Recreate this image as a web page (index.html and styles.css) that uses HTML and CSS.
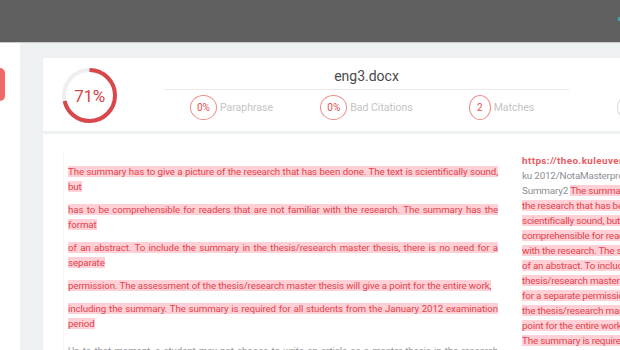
FILE: index.html
```html
<!DOCTYPE html>
<html lang="en">
<head>
<meta charset="UTF-8">
<meta name="viewport" content="width=device-width, initial-scale=1.0">
<title>eng3.docx - report</title>
<link rel="stylesheet" href="styles.css">
</head>
<body>
  <header class="topbar">
    <span class="topbar-dot"></span>
  </header>
  <div class="layout">
    <aside class="sidebar">
      <div class="sidebar-btn"></div>
    </aside>
    <main class="main">
      <section class="card summary-card">
        <div class="gauge">
          <svg width="55" height="55" viewBox="0 0 55 55">
            <circle cx="27.5" cy="27.5" r="25.5" fill="none" stroke="#efefef" stroke-width="4"/>
            <circle cx="27.5" cy="27.5" r="25.5" fill="none" stroke="#d9474a" stroke-width="4"
                    stroke-dasharray="113.8 160.2" transform="rotate(-90 27.5 27.5)"/>
          </svg>
          <span class="gauge-value">71%</span>
        </div>
        <div class="summary-info">
          <h1 class="doc-title">eng3.docx</h1>
          <div class="stats">
            <div class="stat"><span class="badge">0%</span><span class="stat-label">Paraphrase</span></div>
            <div class="stat"><span class="badge">0%</span><span class="stat-label">Bad Citations</span></div>
            <div class="stat"><span class="badge">2</span><span class="stat-label">Matches</span></div>
            <div class="stat stat-muted"><span class="badge">0</span><span class="stat-label">Sources</span></div>
          </div>
        </div>
      </section>
      <section class="card doc-card">
        <div class="doc-text">
          <p><span class="hl">The summary has to give a picture of the research that has been done. The text is scientifically sound, but</span></p>
          <p><span class="hl">has to be comprehensible for readers that are not familiar with the research. The summary has the format</span></p>
          <p><span class="hl">of an abstract. To include the summary in the thesis/research master thesis, there is no need for a separate</span></p>
          <p><span class="hl">permission. The assessment of the thesis/research master thesis will give a point for the entire work,</span></p>
          <p><span class="hl">including the summary. The summary is required for all students from the January 2012 examination period</span></p>
          <p class="plain">Up to that moment, a student may not choose to write an article as a master thesis in the research master.</p>
        </div>
        <div class="source">
          <a class="source-link">https://theo.kuleuven.be/</a>
          <span class="source-path">ku 2012/NotaMasterproef</span>
          <p class="source-text">Summary2 <span class="hl">The summary has to give a picture of the research that has been done. The text is scientifically sound, but has to be comprehensible for readers that are not familiar with the research. The summary has the format of an abstract. To include the summary in the thesis/research master thesis, there is no need for a separate permission. The assessment of the thesis/research master thesis will give a point for the entire work, including the summary. The summary is required for all students from the January 2012 examination period</span></p>
        </div>
      </section>
    </main>
  </div>
</body>
</html>
```

FILE: styles.css
```css
body { margin: 0; font-family: Roboto, "Liberation Sans", sans-serif; background: #eef1f2; overflow: hidden; height: 350px; }
.topbar { height: 42px; background: #5f5f5f; border-bottom: 1px solid #c9c9c9; display: flex; justify-content: flex-end; align-items: flex-start; }
.topbar-dot { width: 2px; height: 4px; margin-top: 17px; background: #3aa6b0; }
.layout { display: flex; height: 307px; }
.sidebar { width: 20px; flex: none; background: #fff; overflow: hidden; padding-top: 25px; box-sizing: border-box; }
.sidebar-btn { width: 40px; height: 33px; margin-left: -35px; background: #f06868; border-radius: 5px; }
.main { flex: none; width: 700px; padding: 15px 0 0 23px; }
.card { background: #fff; width: 640px; }
.summary-card { height: 73px; margin-bottom: 3px; display: flex; align-items: flex-start; padding-left: 19px; box-sizing: border-box; }
.gauge { display: grid; place-items: center; margin-top: 10px; width: 55px; height: 55px; }
.gauge svg, .gauge-value { grid-area: 1 / 1; }
.gauge-value { font-size: 17px; color: #d5454a; letter-spacing: -0.3px; }
.summary-info { margin-left: 47px; padding-top: 8px; }
.doc-title { margin: 0; width: 405px; font-size: 14px; font-weight: 400; line-height: 20px; color: #4a4a4a; text-align: center; padding-bottom: 3px; border-bottom: 1px solid #eaeaea; }
.stats { display: flex; margin-top: 5px; }
.stat { width: 135px; flex: none; display: flex; align-items: center; justify-content: center; }
.stat-muted { justify-content: flex-start; padding-left: 48px; box-sizing: border-box; }
.badge { min-width: 8px; height: 23px; padding: 0 6px; border: 1px solid #ef8a8a; border-radius: 50%; font-size: 10px; color: #e05050; display: flex; align-items: center; justify-content: center; }
.stat-muted .badge { border-color: #d6d6d6; color: #bbb; }
.stat-label { margin-left: 3px; font-size: 10.5px; color: #c4c4c4; }
.doc-card { height: 250px; display: flex; align-items: flex-start; padding: 19px 0 0 20px; box-sizing: border-box; }
.doc-text { width: 430px; flex: none; padding: 11px 0 0 4px; border-left: 1px solid #f4f4f4; font-size: 9.7px; letter-spacing: -0.1px; line-height: 15px; text-align: justify; }
.doc-text p { margin: 0 0 8px; }
.doc-text .plain { margin-top: 12px; color: #999; }
.hl { background: #ffd0d5; color: #e2434e; }
.source { width: 205px; margin-left: 24px; flex: none; font-size: 9.9px; letter-spacing: -0.2px; line-height: 15px; }
.source-link { display: block; font-weight: 700; color: #ea5b63; letter-spacing: 0.4px; white-space: nowrap; }
.source-path { display: block; color: #8a8f96; white-space: nowrap; }
.source-text { margin: 0; color: #8a8f96; }
```
